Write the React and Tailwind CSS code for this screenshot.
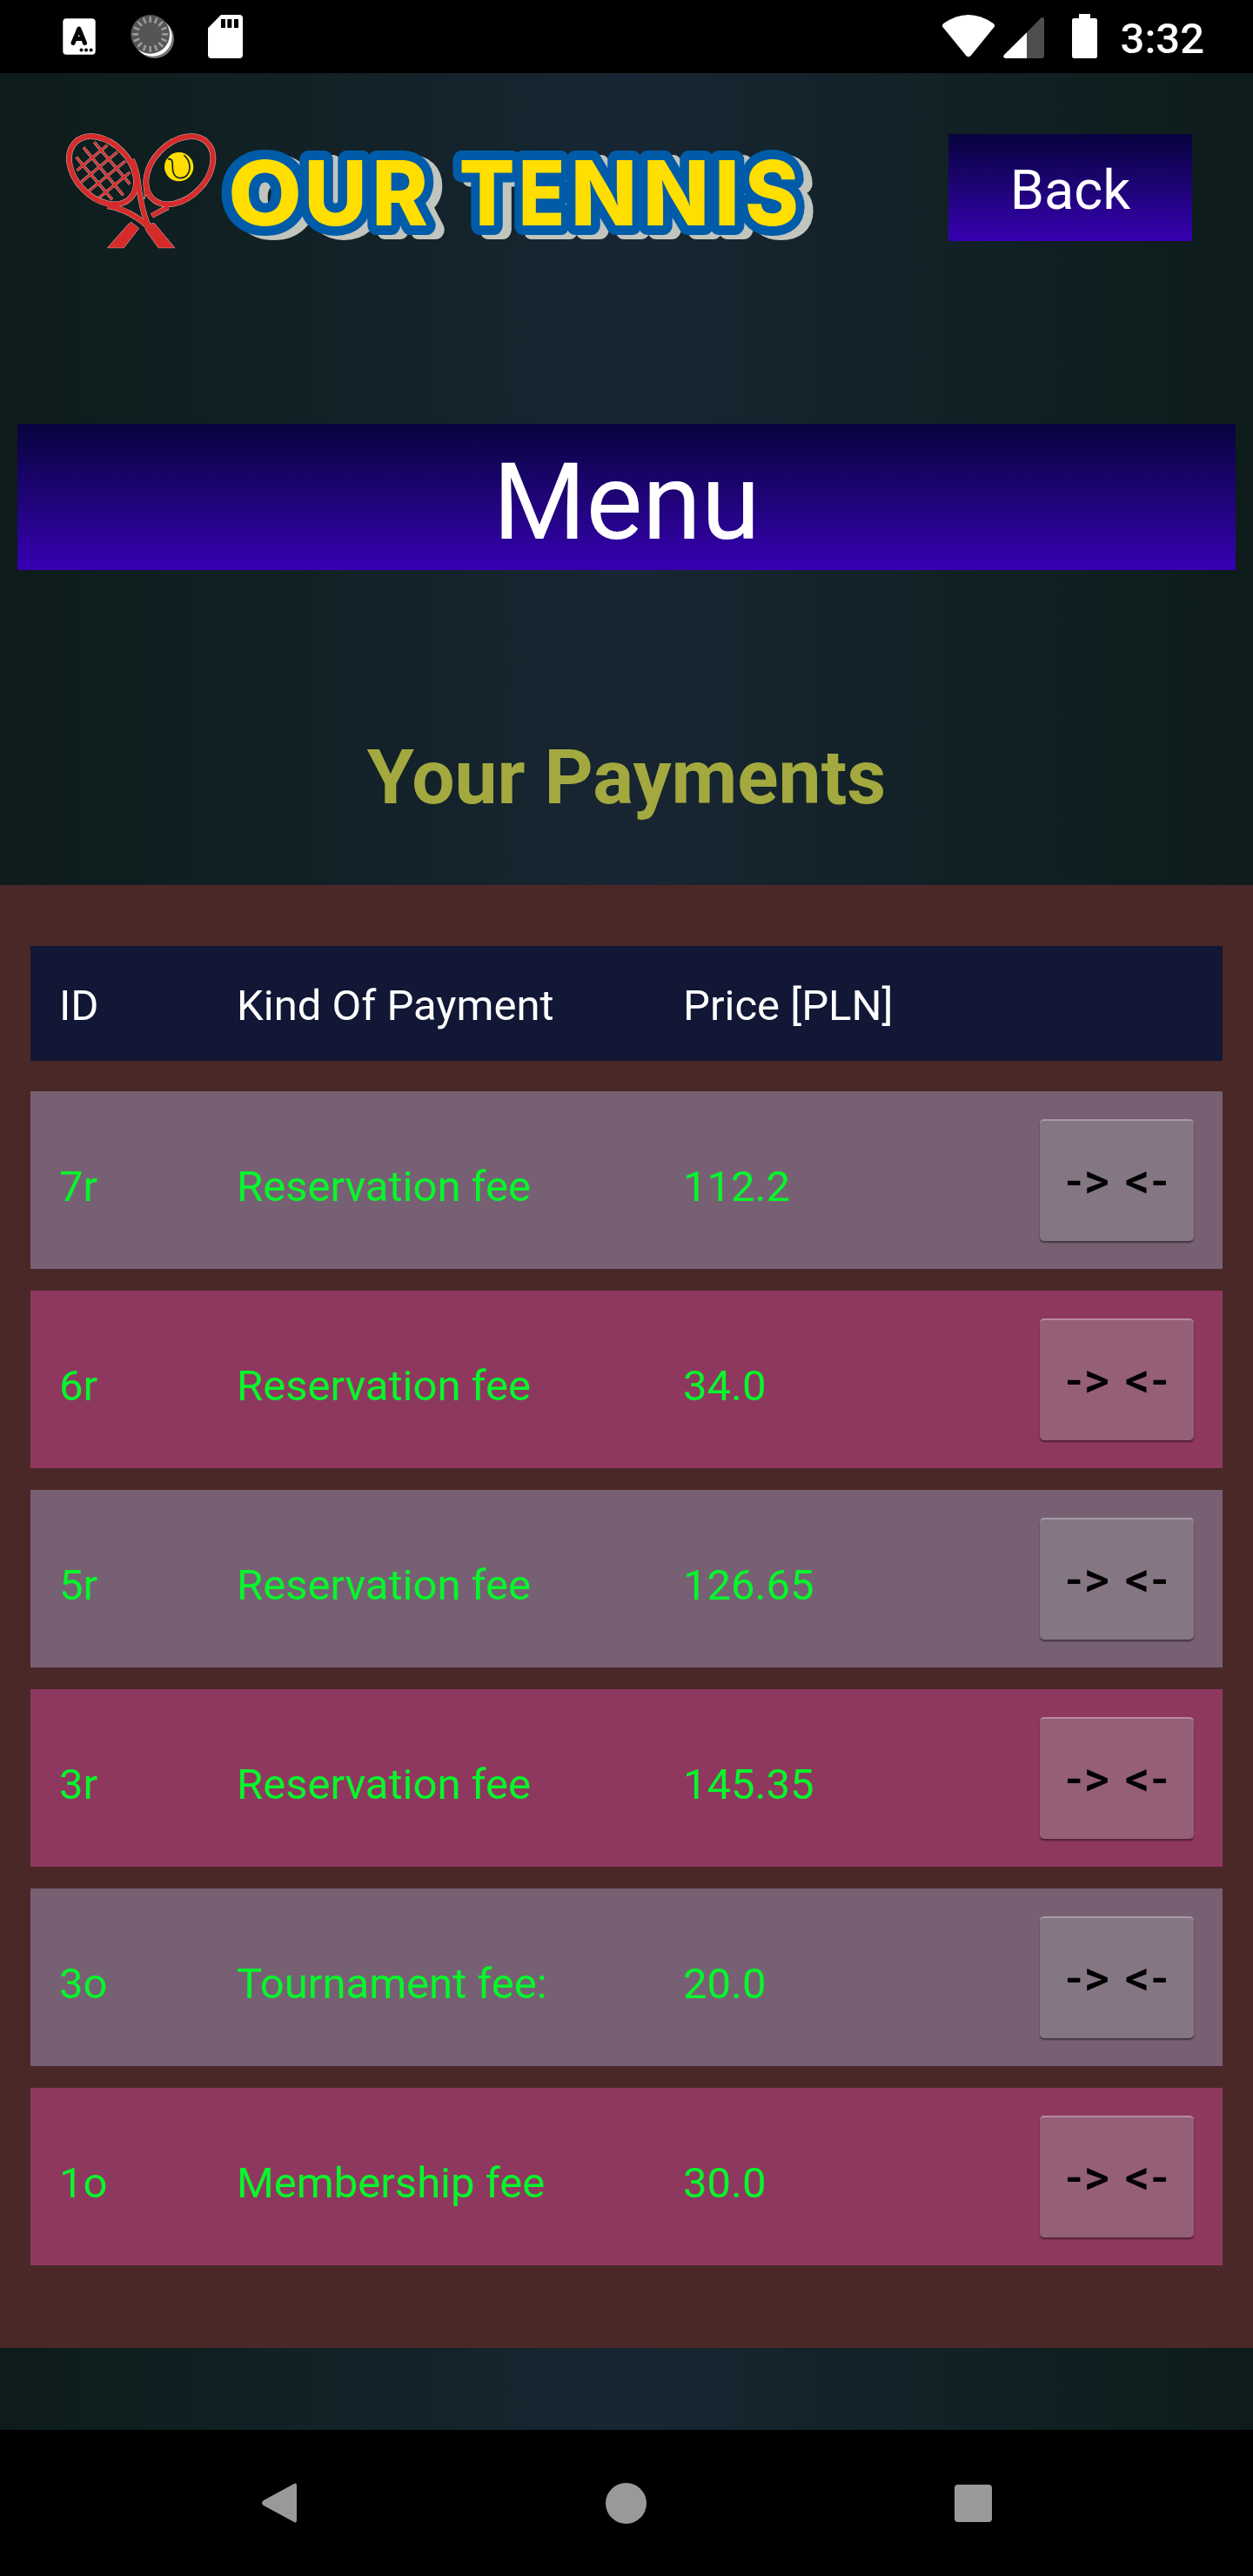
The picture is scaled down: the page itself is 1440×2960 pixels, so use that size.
import React from "react";

const payments = [
  { id: "7r", kind: "Reservation fee", price: "112.2" },
  { id: "6r", kind: "Reservation fee", price: "34.0" },
  { id: "5r", kind: "Reservation fee", price: "126.65" },
  { id: "3r", kind: "Reservation fee", price: "145.35" },
  { id: "3o", kind: "Tournament fee:", price: "20.0" },
  { id: "1o", kind: "Membership fee", price: "30.0" },
];

/* Each logo letter with its centre on the baseline and its width factor. */
const logoLetters = [
  { ch: "O", x: 304.5, s: 1.07 },
  { ch: "U", x: 385.5, s: 0.97 },
  { ch: "R", x: 459.6, s: 0.95 },
  { ch: "T", x: 559.5, s: 0.92 },
  { ch: "E", x: 622.5, s: 0.85 },
  { ch: "N", x: 694, s: 0.97 },
  { ch: "N", x: 777, s: 0.97 },
  { ch: "I", x: 835.5, s: 1 },
  { ch: "S", x: 887, s: 0.91 },
];

function StatusBar() {
  const ticks = Array.from({ length: 16 }, (_, i) => i * 22.5);
  return (
    <div className="flex h-[84px] items-start justify-between bg-black">
      <div className="flex items-start pl-[72px]">
        <svg className="mt-[21px] h-[42px] w-[38px]" viewBox="0 0 38 42">
          <rect x="0.3" y="0.3" width="37.4" height="41.4" rx="4" fill="#fff" />
          <path d="M12 28.5 L18.8 12 L25.5 28.5 M14.8 23.5 H22.8" fill="none" stroke="#000" strokeWidth="5" strokeLinecap="round" strokeLinejoin="round" />
          <circle cx="21.5" cy="36.5" r="2" />
          <circle cx="27" cy="36.5" r="2" />
          <circle cx="32.6" cy="36.5" r="2" />
        </svg>
        <svg className="ml-[40px] mt-[17px] h-[50px] w-[50px]" viewBox="0 0 150 150">
          <circle cx="83" cy="83" r="67" fill="#767676" />
          <circle cx="76" cy="76" r="67" fill="#fff" />
          <circle cx="68" cy="67" r="67" fill="#555" />
          {ticks.map((a) => (
            <line key={a} x1="68" y1="9" x2="68" y2="23" stroke="#9a9a9a" strokeWidth="8" strokeLinecap="round" transform={`rotate(${a} 68 67)`} />
          ))}
        </svg>
        <svg className="ml-[39px] mt-[17px] h-[50px] w-[40px]" viewBox="0 0 120 150">
          <path d="M45 0 H108 Q120 0 120 12 V138 Q120 150 108 150 H12 Q0 150 0 138 V46 Z" fill="#fff" />
          <path d="M45 15 h15 v30 h-15z M67 15 h15 v30 h-15z M90 15 h15 v30 h-15z" fill="#000" />
        </svg>
      </div>
      <div className="flex items-start pr-[56px]">
        <svg className="mt-[17px] h-[49px] w-[60px]" viewBox="0 0 180 147">
          <path d="M4 30 Q90 -30 176 30 Q183 36 178 43 L98 141 Q90 149 82 141 L2 43 Q-3 36 4 30 Z" fill="#fff" />
        </svg>
        <svg className="ml-[10px] mt-[19px] h-[48px] w-[47px]" viewBox="0 0 141 144">
          <path d="M81 55 V144 H8 Q-4 141 3 132 Z" fill="#fff" />
          <path d="M81 55 L131 4 Q139 -1 141 8 V135 Q141 144 132 144 H81 Z" fill="#4e4e4e" />
        </svg>
        <svg className="ml-[32px] mt-[16px] h-[51px] w-[29px]" viewBox="0 0 87 153">
          <path d="M24 0 H63 V15 H80 Q87 15 87 22 V146 Q87 153 80 153 H7 Q0 153 0 146 V22 Q0 15 7 15 H24 Z" fill="#fff" />
        </svg>
        <span className="ml-[27px] mt-[15px] text-[49px] leading-[60px] font-medium text-white">3:32</span>
      </div>
    </div>
  );
}

function RacketShapes({ color, grow }) {
  return (
    <g stroke={color} fill="none" strokeLinecap="butt">
      <ellipse cx="174" cy="197" rx="135" ry="94" transform="rotate(46 174 197)" strokeWidth={17 + grow} />
      <ellipse cx="439" cy="197" rx="135" ry="94" transform="rotate(-46 439 197)" strokeWidth={17 + grow} />
      <path d="M145 100 L268 245 M108 118 L245 283 M83 152 L207 298 M190 110 L85 198 M224 134 L100 238 M252 166 L127 268 M268 204 L163 290" strokeWidth={7 + grow} />
      <path d="M275 160 C306 220 290 290 330 385" strokeWidth={16 + grow} />
      <path d="M190 320 C250 330 290 355 330 390" strokeWidth={17 + grow} />
      <path d="M400 324 Q375 336 343 354" strokeWidth={15 + grow} />
      <path d="M318 225 L318 296 L330 262 Z" fill={color} strokeWidth={grow} />
      <path d="M322 384 L352 380 L422 464 H366 L322 402 Z" fill={color} strokeWidth={grow} />
      <path d="M272 376 L299 397 L247 464 H191 L260 386 Z" fill={color} strokeWidth={grow} />
    </g>
  );
}

function Logo() {
  return (
    <svg className="h-[170px] w-[900px]" viewBox="60 130 900 170" role="img" aria-label="Our Tennis">
      <g transform="translate(60 130) scale(0.33333)">
        <RacketShapes color="#c9b4b4" grow={3} />
        <RacketShapes color="#d62b2b" grow={0} />
        <circle cx="437" cy="185" r="50" fill="#ffde00" />
        <path d="M398 158 C414 156 415 165 415 180 C414 205 422 224 442 224 C470 222 478 195 472 172 Q468 156 454 145" fill="none" stroke="#0f2026" strokeWidth="5" />
      </g>
      <g
        className="fill-[#ffde00] stroke-[#005ca8] font-['Inter'] text-[103px] font-extrabold [paint-order:stroke] [filter:drop-shadow(10px_5.5px_0_#c2c5bd)]"
        strokeWidth="22"
        strokeLinejoin="round"
      >
        {logoLetters.map((l, i) => (
          <text key={i} textAnchor="middle" transform={`translate(${l.x} 258.7) scale(${l.s} 1)`}>
            {l.ch}
          </text>
        ))}
      </g>
    </svg>
  );
}

function PaymentRow({ payment, striped }) {
  return (
    <div className={`flex h-[204px] items-center pl-[33px] pr-[33px] text-[49px] leading-[58px] text-[#06f72b] ${striped ? "bg-[#8f385f]" : "bg-[#786074]"}`}>
      <span className="w-[204px] pt-[15px]">{payment.id}</span>
      <span className="w-[513px] pt-[15px]">{payment.kind}</span>
      <span className="flex-1 pt-[15px]">{payment.price}</span>
      <button
        className={`flex h-[140px] w-[177px] items-center justify-center rounded-[5px] border-t-2 pl-[2px] text-[56px] font-medium tracking-[2px] whitespace-nowrap text-black shadow-[0_2px_2px_rgba(0,0,0,0.45)] ${
          striped ? "border-[#b58ba0] bg-[#955f77]" : "border-[#a79aa5] bg-[#857684]"
        }`}
      >
        {"-> <-"}
      </button>
    </div>
  );
}

export default function App() {
  return (
    <div className="flex h-[2960px] w-[1440px] flex-col overflow-hidden bg-linear-to-r from-[#0d1c1a] via-[#172632] to-[#0d1c1a] font-['Roboto',sans-serif]">
      <StatusBar />
      <header className="flex h-[403px] items-start justify-between pl-[60px] pr-[70px]">
        <div className="mt-[46px]">
          <Logo />
        </div>
        <button className="mt-[70px] h-[123px] w-[280px] bg-linear-to-b from-[#08033f] to-[#3700b3] pt-[6px] text-[63px] leading-[74px] text-white">
          Back
        </button>
      </header>
      <button className="mx-[20px] h-[168px] shrink-0 bg-linear-to-b from-[#08033f] to-[#3700b3] pt-[12px] text-[122.5px] leading-[144px] text-white">
        Menu
      </button>
      <h1 className="flex h-[362px] shrink-0 items-center justify-center pt-[114px] text-[87.5px] leading-[104px] font-bold text-[#a4a93f]">
        Your Payments
      </h1>
      <main className="flex h-[1681px] shrink-0 flex-col bg-[#4b2828] px-[35px] pt-[70px]">
        <div className="mb-[35px] flex h-[132px] items-center bg-[#111735] pl-[33px] pt-[5px] text-[49px] leading-[58px] text-white">
          <span className="w-[204px]">ID</span>
          <span className="w-[513px]">Kind Of Payment</span>
          <span>Price [PLN]</span>
        </div>
        <div className="flex flex-col gap-[25px]">
          {payments.map((p, i) => (
            <PaymentRow key={p.id} payment={p} striped={i % 2 === 1} />
          ))}
        </div>
      </main>
      <nav className="mt-auto flex h-[168px] items-center bg-black pl-[300px]">
        <svg className="h-[46px] w-[42px]" viewBox="0 0 42 46">
          <path d="M38 1 Q41 -1 41 4 V42 Q41 47 38 45 L3 26 Q-1 23 3 20 Z" fill="#999" />
        </svg>
        <div className="ml-[354px] size-[47px] rounded-full bg-[#999]" />
        <div className="ml-[354px] size-[43px] rounded-[4px] bg-[#999]" />
      </nav>
    </div>
  );
}
